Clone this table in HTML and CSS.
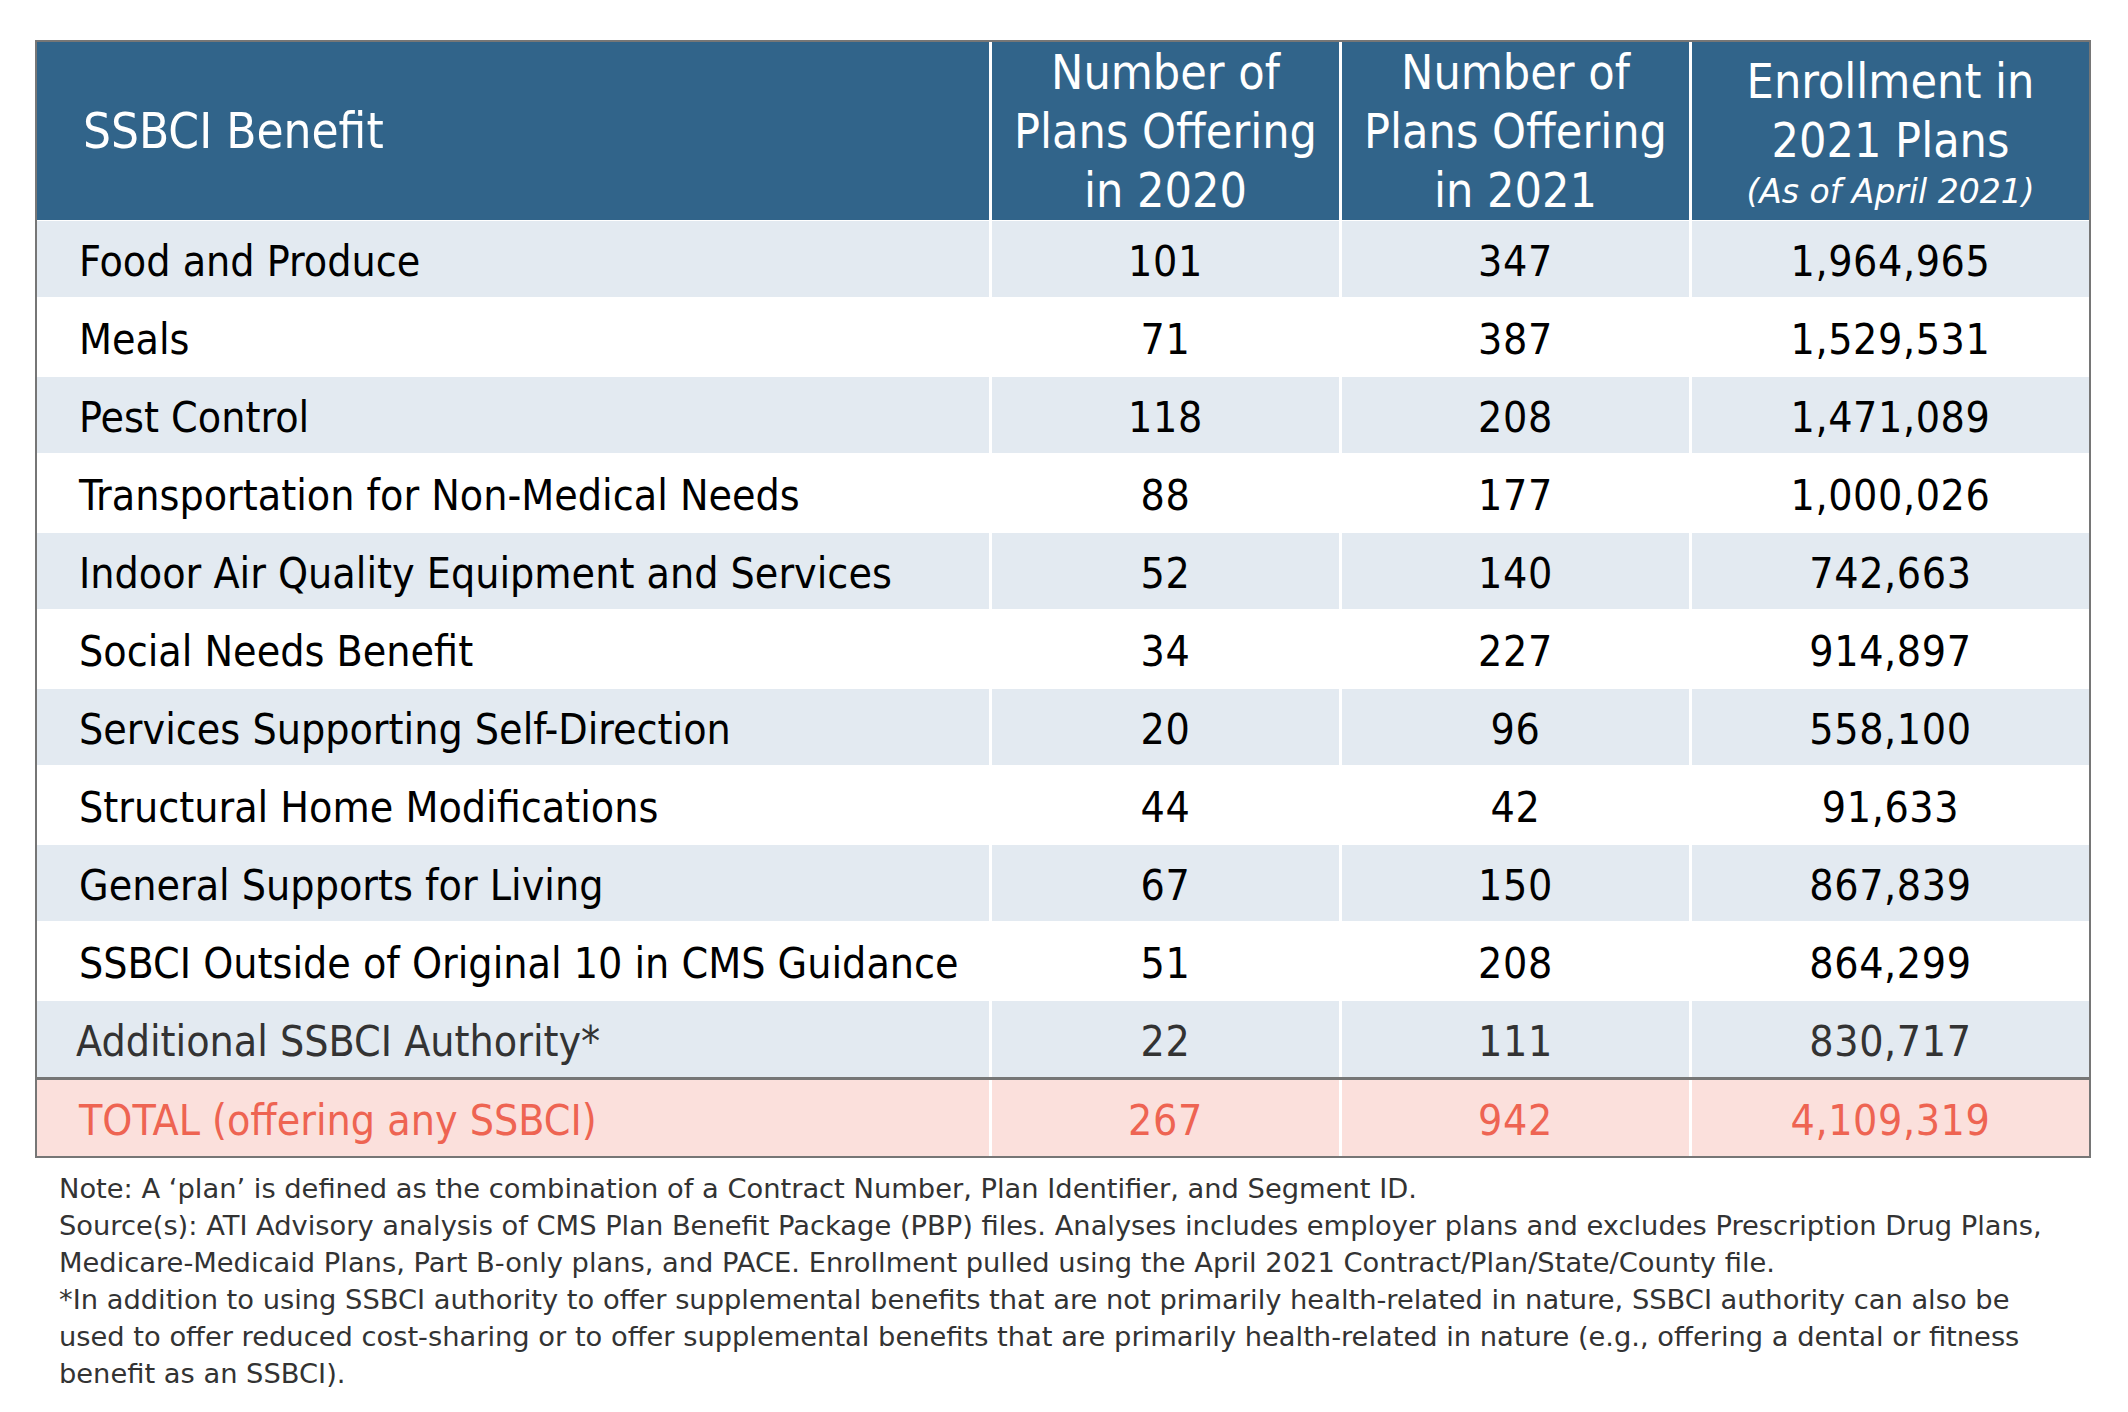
FILE: index.html
```html
<!DOCTYPE html>
<html lang="en">
<head>
<meta charset="utf-8">
<title>SSBCI Benefits</title>
<link rel="stylesheet" href="styles.css">
</head>
<body>
<div class="page">
  <div class="table">
    <div class="grid head">
      <div class="hcell first">SSBCI Benefit</div>
      <div class="hcell"><span>Number of</span><span>Plans Offering</span><span>in 2020</span></div>
      <div class="hcell"><span>Number of</span><span>Plans Offering</span><span>in 2021</span></div>
      <div class="hcell enroll"><span>Enrollment in</span><span>2021 Plans</span><span class="sub">(As of April 2021)</span></div>
    </div>
    <div class="grid body">
      <div class="row shade"><div class="cell name">Food and Produce</div><div class="cell">101</div><div class="cell">347</div><div class="cell">1,964,965</div></div>
      <div class="row"><div class="cell name">Meals</div><div class="cell">71</div><div class="cell">387</div><div class="cell">1,529,531</div></div>
      <div class="row shade"><div class="cell name">Pest Control</div><div class="cell">118</div><div class="cell">208</div><div class="cell">1,471,089</div></div>
      <div class="row"><div class="cell name">Transportation for Non-Medical Needs</div><div class="cell">88</div><div class="cell">177</div><div class="cell">1,000,026</div></div>
      <div class="row shade"><div class="cell name">Indoor Air Quality Equipment and Services</div><div class="cell">52</div><div class="cell">140</div><div class="cell">742,663</div></div>
      <div class="row"><div class="cell name">Social Needs Benefit</div><div class="cell">34</div><div class="cell">227</div><div class="cell">914,897</div></div>
      <div class="row shade"><div class="cell name">Services Supporting Self-Direction</div><div class="cell">20</div><div class="cell">96</div><div class="cell">558,100</div></div>
      <div class="row"><div class="cell name">Structural Home Modifications</div><div class="cell">44</div><div class="cell">42</div><div class="cell">91,633</div></div>
      <div class="row shade"><div class="cell name">General Supports for Living</div><div class="cell">67</div><div class="cell">150</div><div class="cell">867,839</div></div>
      <div class="row"><div class="cell name">SSBCI Outside of Original 10 in CMS Guidance</div><div class="cell">51</div><div class="cell">208</div><div class="cell">864,299</div></div>
      <div class="row shade grey"><div class="cell name">Additional SSBCI Authority*</div><div class="cell">22</div><div class="cell">111</div><div class="cell">830,717</div></div>
    </div>
    <div class="grid total">
      <div class="cell name">TOTAL (offering any SSBCI)</div><div class="cell">267</div><div class="cell">942</div><div class="cell">4,109,319</div>
    </div>
  </div>
  <div class="notes">
    <span class="line">Note: A ‘plan’ is defined as the combination of a Contract Number, Plan Identifier, and Segment ID.</span>
    <span class="line">Source(s): ATI Advisory analysis of CMS Plan Benefit Package (PBP) files. Analyses includes employer plans and excludes Prescription Drug Plans,</span>
    <span class="line">Medicare-Medicaid Plans, Part B-only plans, and PACE. Enrollment pulled using the April 2021 Contract/Plan/State/County file.</span>
    <span class="line">*In addition to using SSBCI authority to offer supplemental benefits that are not primarily health-related in nature, SSBCI authority can also be</span>
    <span class="line">used to offer reduced cost-sharing or to offer supplemental benefits that are primarily health-related in nature (e.g., offering a dental or fitness</span>
    <span class="line">benefit as an SSBCI).</span>
  </div>
</div>
</body>
</html>
```
FILE: styles.css
```css
html, body {
  margin: 0;
  padding: 0;
  background: #ffffff;
}
body {
  font-family: "DejaVu Sans", Verdana, sans-serif;
  font-stretch: condensed;
}
.page {
  padding: 40px 0 0 35px;
}
.table {
  width: fit-content;
  border: 2px solid #767676;
  background: #ffffff;
}
.grid {
  display: grid;
  grid-template-columns: 952px 347px 347px 397px;
  column-gap: 3px;
}
.head {
  height: 176px;
}
.hcell {
  background: #31648a;
  color: #ffffff;
  font-size: 48px;
  line-height: 59px;
  display: flex;
  flex-direction: column;
  align-items: center;
  padding-top: 1px;
  white-space: nowrap;
  overflow: visible;
}
.hcell.first {
  justify-content: center;
  align-items: flex-start;
  padding: 0 0 0 46px;
  line-height: 1;
  font-size: 49px;
}
.hcell.enroll {
  padding-top: 10px;
}
.hcell .sub {
  font-size: 33px;
  font-style: italic;
  font-stretch: normal;
  line-height: 44px;
}
.body {
  margin-top: 3px;
  row-gap: 2px;
}
.row {
  display: contents;
}
.cell {
  height: 76px;
  display: flex;
  align-items: center;
  justify-content: center;
  font-size: 42.5px;
  letter-spacing: 0.6px;
  color: #000000;
  white-space: nowrap;
  padding-top: 4px;
  box-sizing: border-box;
}
.cell.name {
  justify-content: flex-start;
  padding-left: 42px;
  letter-spacing: 0;
}
.row.shade .cell {
  background: #e3eaf1;
}
.row.grey .cell {
  color: #333333;
}
.row.grey .cell.name {
  padding-left: 39px;
}
.total {
  border-top: 3px solid #767676;
}
.total .cell {
  background: #fbe0dc;
  color: #ee6452;
}
.notes {
  margin-top: 12px;
  padding-left: 24px;
  font-size: 27.3px;
  font-stretch: normal;
  line-height: 37px;
  color: #333333;
}
.line {
  display: block;
  white-space: nowrap;
}
```
